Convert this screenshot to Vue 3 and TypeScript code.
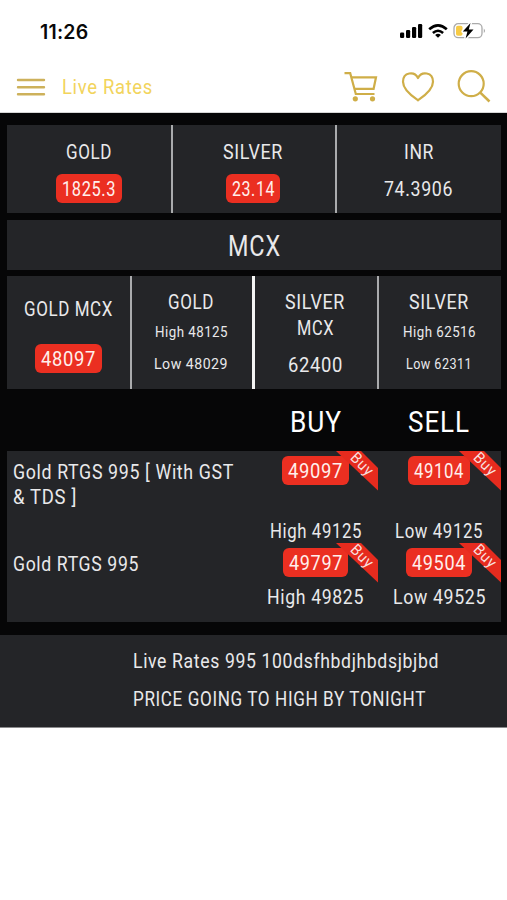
<script setup lang="ts">
import { h } from 'vue'

interface LabelProps { t: string; w: number; c?: number }

// Single-line label fitted to a given width; c is the height of its capitals.
const Label = (p: LabelProps) => {
  const cap = Number(p.c ?? 15)
  return h('svg', { class: 'label', width: p.w, height: cap }, [
    h('text', {
      x: 0,
      y: cap,
      'font-size': cap / 0.711,
      'letter-spacing': cap * 0.05,
      textLength: p.w,
      lengthAdjust: 'spacingAndGlyphs',
      fill: 'currentColor',
    }, p.t),
  ])
}
Label.props = ['t', 'w', 'c']

const spot = [
  { name: 'GOLD', nw: 46, value: '1825.3', vw: 54, pill: 66 },
  { name: 'SILVER', nw: 60, value: '23.14', vw: 43, pill: 54 },
  { name: 'INR', nw: 30, value: '74.3906', vw: 69, pill: 0 },
]

interface Side { value: string; vw: number; pill: number; note: string; nw: number }
interface Rate { lines: { t: string; w: number }[]; sides: Side[] }
const rates: Rate[] = [
  {
    lines: [{ t: 'Gold RTGS 995 [ With GST', w: 221 }, { t: '& TDS ]', w: 64 }],
    sides: [
      { value: '49097', vw: 55, pill: 67, note: 'High 49125', nw: 92 },
      { value: '49104', vw: 50, pill: 62, note: 'Low 49125', nw: 88 },
    ],
  },
  {
    lines: [{ t: 'Gold RTGS 995', w: 126 }],
    sides: [
      { value: '49797', vw: 54, pill: 65, note: 'High 49825', nw: 97 },
      { value: '49504', vw: 54, pill: 66, note: 'Low 49525', nw: 93 },
    ],
  },
]
</script>

<template>
  <div class="screen">
    <div class="status">
      <span class="clock">11:26</span>
      <svg class="signals" width="88" height="18" viewBox="0 0 88 18">
        <g fill="#000">
          <rect x="1" y="10.5" width="4.2" height="5.5" rx="1.2" />
          <rect x="7" y="8" width="4.2" height="8" rx="1.2" />
          <rect x="13" y="5" width="4.2" height="11" rx="1.2" />
          <rect x="19" y="2" width="4.2" height="14" rx="1.2" />
        </g>
        <g fill="none" stroke="#000" stroke-width="2.6">
          <path d="M30.2 7.3Q39 -0.6 47.8 7.3" />
          <path d="M33.9 11Q39 6.5 44.1 11" />
        </g>
        <path d="M36.1 12.9Q39 10.8 41.9 12.9L39 15.8Z" fill="#000" />
        <rect x="55" y="1.7" width="28" height="14" rx="4.2" fill="none" stroke="#aaa" stroke-width="1.3" />
        <path d="M84.8 6.4q2.2 2.3 0 4.6z" fill="#999" />
        <rect x="57" y="3.7" width="6.5" height="10" rx="1.8" fill="#f7cb45" />
        <path d="M71.5 1L63.8 9.6H68.4L66.6 16.5L74.5 7.5H69.8Z" fill="#000" stroke="#fff" stroke-width="3" paint-order="stroke" stroke-linejoin="round" />
      </svg>
    </div>
    <header class="bar">
      <svg width="30" height="20" viewBox="0 0 30 20" fill="none" stroke="#cdb15b" stroke-width="2.4" stroke-linecap="round">
        <path d="M2 3H28M2 10.2H28M2 17.2H28" />
      </svg>
      <Label class="title" t="Live Rates" :w="91" :c="15" />
      <svg class="tools" width="148" height="36" viewBox="0 0 148 36" fill="none" stroke="#cfae48" stroke-width="2.2">
        <path d="M1.5 4.2H7.2L12.8 25H31.5" />
        <path d="M8.4 8.3H33L30.6 19.8H11.6" />
        <circle cx="12.3" cy="29.8" r="2.6" fill="#cfae48" stroke="none" />
        <circle cx="29.5" cy="29.8" r="2.6" fill="#cfae48" stroke="none" />
        <path d="M75 31.3C71 28.5 60 21.5 60 12.8C60 2.9 71.5 1.8 75 9C78.5 1.8 90 2.9 90 12.8C90 21.5 79 28.5 75 31.3Z" stroke-linejoin="round" />
        <circle cx="128.2" cy="14.7" r="12.5" />
        <path d="M137.3 23.7L146.5 32.5" stroke-width="2.5" />
      </svg>
    </header>

    <main>
      <section class="panel spot">
        <div v-for="s in spot" :key="s.name" class="cell">
          <Label :t="s.name" :w="s.nw" :c="15" />
          <div class="value" :class="{ pill: s.pill }" :style="s.pill ? { width: s.pill + 'px' } : {}">
            <Label :t="s.value" :w="s.vw" :c="15" />
          </div>
        </div>
      </section>

      <section class="panel heading"><Label t="MCX" :w="53" :c="21" /></section>

      <section class="panel mcx">
        <div class="cell single">
          <Label t="GOLD MCX" :w="89" :c="15" />
          <div class="value pill"><Label t="48097" :w="55" :c="15" /></div>
        </div>
        <div class="cell range">
          <Label t="GOLD" :w="46" :c="15" />
          <Label class="high" t="High 48125" :w="73" :c="11" />
          <Label class="low" t="Low 48029" :w="74" :c="11" />
        </div>
        <div class="cell double">
          <Label t="SILVER" :w="60" :c="15" />
          <Label class="second" t="MCX" :w="37" :c="15" />
          <Label class="plain" t="62400" :w="55" :c="15" />
        </div>
        <div class="cell range">
          <Label t="SILVER" :w="60" :c="15" />
          <Label class="high" t="High 62516" :w="73" :c="11" />
          <Label class="low" t="Low 62311" :w="66" :c="11" />
        </div>
      </section>

      <div class="sides">
        <span></span>
        <Label t="BUY" :w="52" :c="21.5" />
        <Label t="SELL" :w="62" :c="21.5" />
      </div>

      <section class="panel rates">
        <div v-for="(r, i) in rates" :key="i" class="rate">
          <div class="name">
            <Label v-for="l in r.lines" :key="l.t" :t="l.t" :w="l.w" :c="15" />
          </div>
          <div v-for="s in r.sides" :key="s.value" class="side">
            <div class="value pill" :style="{ width: s.pill + 'px' }"><Label :t="s.value" :w="s.vw" :c="15" /></div>
            <svg class="ribbon" width="42" height="40" viewBox="0 0 42 40">
              <path d="M0 0H25L42 17V39.5Z" fill="#e62b1e" />
              <text x="0" y="0" transform="translate(13.4 7.6) rotate(45)" font-size="15.5" letter-spacing="0.8" textLength="26" lengthAdjust="spacingAndGlyphs" fill="#f9dedb">Buy</text>
            </svg>
            <Label class="note" :t="s.note" :w="s.nw" :c="15" />
          </div>
        </div>
      </section>
    </main>

    <footer>
      <Label t="Live Rates 995 100dsfhbdjhbdsjbjbd" :w="306" :c="15" />
      <Label t="PRICE GOING TO HIGH BY TONIGHT" :w="293" :c="15" />
    </footer>
  </div>
</template>

<style>
body { margin: 0; background: #fff; }
</style>

<style scoped>
.screen { width: 507px; height: 900px; background: #fff; font-family: Roboto, "Liberation Sans", sans-serif; color: #e9e9eb; overflow: hidden; }
svg { display: block; flex: none; overflow: visible; }
.status { box-sizing: border-box; height: 61px; padding: 22px 20px 0 40px; display: flex; justify-content: space-between; align-items: flex-start; color: #080808; }
.clock { font: 600 19.5px/20px Inter, sans-serif; letter-spacing: 0.2px; }
.bar { box-sizing: border-box; height: 52px; padding: 0 16px; display: flex; align-items: center; border-bottom: 1px solid #d6d6d6; }
.title { margin-left: 16px; color: #f2d45c; }
.tools { margin-left: auto; }
main { box-sizing: border-box; height: 522px; padding: 12px 6px 0 7px; background: #060607; }
.panel { background: #242528; }
.spot { display: grid; grid-template-columns: repeat(3, 1fr); height: 88px; }
.cell { display: flex; flex-direction: column; align-items: center; box-sizing: border-box; }
.cell:not(:last-child) { border-right: 2px solid #aaabad; margin-right: -1px; }
.spot .cell { padding-top: 19px; }
.value { height: 29px; display: flex; align-items: center; justify-content: center; }
.spot .value { margin-top: 15px; }
.pill { background: #eb2f21; border-radius: 6px; color: #fff0ed; }
.heading { margin-top: 7px; height: 50px; display: flex; justify-content: center; align-items: center; }
.mcx { margin-top: 6px; height: 113px; display: grid; grid-template-columns: repeat(4, 1fr); }
.mcx .single { padding-top: 25px; }
.mcx .cell:nth-child(2) { border-right: 3px solid #f4f4f4; }
.single .pill { width: 67px; margin-top: 28px; }
.range, .double { padding-top: 18px; }
.high { margin-top: 17px; }
.low { margin-top: 20.5px; }
.second { margin-top: 10.5px; }
.plain { margin-top: 22.5px; }
.sides { height: 62px; box-sizing: border-box; padding-top: 21px; display: grid; grid-template-columns: 2fr 1fr 1fr; justify-items: center; color: #fff; }
.rates { height: 171px; }
.rate { display: grid; grid-template-columns: 2fr 1fr 1fr; height: 92px; }
.rate + .rate { height: 79px; }
.name { padding: 12.5px 0 0 6px; display: flex; flex-direction: column; gap: 10.5px; }
.side { position: relative; display: flex; flex-direction: column; align-items: center; padding-top: 5px; }
.ribbon { position: absolute; right: 0; top: 0; }
.note { margin-top: 38px; }
.rate + .rate .note { margin-top: 12px; }
footer { height: 93px; box-sizing: border-box; padding: 18px 0 0 133px; display: flex; flex-direction: column; gap: 22.5px; background: #242528; border-bottom: 1px solid #8b8b8d; }
</style>
